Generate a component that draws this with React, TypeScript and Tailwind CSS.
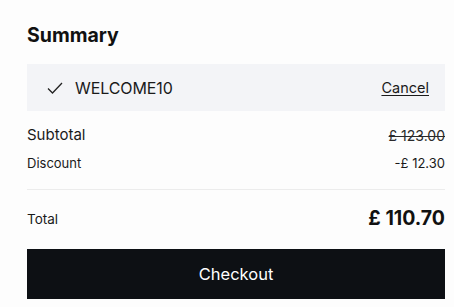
import React from "react";

export default function App() {
  return (
    <div className="w-[454px] h-[307px] bg-[#fdfdfd] overflow-hidden" style={{ fontFamily: "Inter, 'Noto Sans', sans-serif" }}>
      <div className="ml-[27px] w-[418px] pt-[22px]">
        <h2 className="text-[19.5px] leading-[26px] font-bold text-[#111]">Summary</h2>
        <div className="mt-[16px] h-[47px] bg-[#f3f4f7] flex items-center pl-[20px] pr-[16px]">
          <svg width="16" height="12" viewBox="0 0 16 12" className="shrink-0">
            <path d="M1 6.5 L5.5 11 L15 1" fill="none" stroke="#222" strokeWidth="1.3" />
          </svg>
          <span className="ml-[12px] text-[16px] text-[#1a1a1a] tracking-[-0.1px]">WELCOME10</span>
          <span className="ml-auto text-[14.5px] text-[#1a1a1a] underline underline-offset-2">Cancel</span>
        </div>
        <div className="mt-[14px] flex items-center justify-between h-[20px]">
          <span className="text-[15px] text-[#1a1a1a]">Subtotal</span>
          <span className="text-[14px] text-[#2a2a2a] line-through">£ 123.00</span>
        </div>
        <div className="mt-[9px] flex items-center justify-between h-[20px]">
          <span className="text-[13px] text-[#1a1a1a]">Discount</span>
          <span className="text-[13px] text-[#1a1a1a]">-£ 12.30</span>
        </div>
        <div className="mt-[15px] h-px bg-[#ececec]" />
        <div className="mt-[17px] flex items-center justify-between h-[24px]">
          <span className="text-[13.5px] text-[#1a1a1a]">Total</span>
          <span className="text-[19.5px] font-bold text-[#111]">£ 110.70</span>
        </div>
        <button className="mt-[18px] w-full h-[50px] bg-[#0d1014] text-white text-[16.5px] font-normal">Checkout</button>
      </div>
    </div>
  );
}
